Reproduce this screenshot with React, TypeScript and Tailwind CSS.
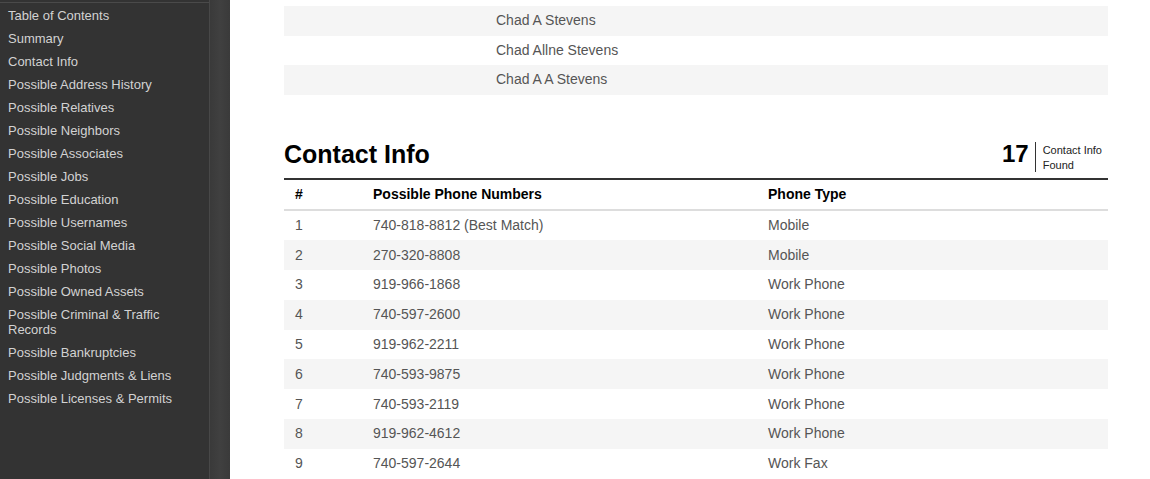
import React from "react";

const nav = [
  "Table of Contents",
  "Summary",
  "Contact Info",
  "Possible Address History",
  "Possible Relatives",
  "Possible Neighbors",
  "Possible Associates",
  "Possible Jobs",
  "Possible Education",
  "Possible Usernames",
  "Possible Social Media",
  "Possible Photos",
  "Possible Owned Assets",
  "Possible Criminal & Traffic Records",
  "Possible Bankruptcies",
  "Possible Judgments & Liens",
  "Possible Licenses & Permits",
];

const names = ["Chad A Stevens", "Chad Allne Stevens", "Chad A A Stevens"];

const phones: [string, string][] = [
  ["740-818-8812 (Best Match)", "Mobile"],
  ["270-320-8808", "Mobile"],
  ["919-966-1868", "Work Phone"],
  ["740-597-2600", "Work Phone"],
  ["919-962-2211", "Work Phone"],
  ["740-593-9875", "Work Phone"],
  ["740-593-2119", "Work Phone"],
  ["919-962-4612", "Work Phone"],
  ["740-597-2644", "Work Fax"],
];

export default function App() {
  return (
    <div
      className="flex h-[479px] w-[1150px] overflow-hidden bg-white"
      style={{ fontFamily: '"Liberation Sans", Arial, sans-serif' }}
    >
      <aside className="flex w-[230px] shrink-0">
        <div className="flex w-[210px] flex-col border-r border-[#484848] bg-[#333333]">
          <div className="mt-[2px] h-px w-full bg-[#4a4a4a]" />
          <nav className="flex flex-col pt-[1px]">
            {nav.map((n) => (
              <div
                key={n}
                className="py-[4px] pl-[8px] pr-[16px] text-[13px] leading-[15px] text-[#d2d2d2]"
              >
                {n}
              </div>
            ))}
          </nav>
        </div>
        <div className="w-[20px] bg-gradient-to-r from-[#3a3a3a] via-[#404040] to-[#3a3a3a]" />
      </aside>

      <main className="flex-1 pl-[54px] pr-[42px]">
        <div className="pt-[6px]">
          {names.map((n, i) => (
            <div
              key={n}
              className={`flex h-[29.5px] items-center pl-[212px] text-[14px] text-[#555555] ${
                i % 2 === 0 ? "bg-[#f5f5f5]" : "bg-white"
              }`}
            >
              {n}
            </div>
          ))}
        </div>

        <div className="mt-[44px] flex items-end justify-between pb-[5px]">
          <h2 className="mb-[4px] text-[25px] font-bold leading-[30px] text-black">Contact Info</h2>
          <div className="flex items-start pr-[6px]">
            <span className="text-[24px] font-bold leading-[23px] text-black">17</span>
            <div className="ml-[6px] mr-[7px] h-[30px] w-px bg-[#333333]" />
            <div className="pt-[1px] text-[11px] leading-[15px] text-[#222222]">
              Contact Info
              <br />
              Found
            </div>
          </div>
        </div>

        <div className="border-t-2 border-[#333333]">
          <div className="grid h-[31px] grid-cols-[78px_395px_1fr] items-center border-b-2 border-[#dddddd] text-[14px] font-bold text-black">
            <div className="pl-[11px]">#</div>
            <div className="pl-[11px]">Possible Phone Numbers</div>
            <div className="pl-[11px]">Phone Type</div>
          </div>
          {phones.map(([p, t], i) => (
            <div
              key={p}
              className={`grid h-[29.8px] grid-cols-[78px_395px_1fr] items-center text-[14px] text-[#555555] ${
                i % 2 === 1 ? "bg-[#f5f5f5]" : "bg-white"
              }`}
            >
              <div className="pl-[11px]">{i + 1}</div>
              <div className="pl-[11px]">{p}</div>
              <div className="pl-[11px]">{t}</div>
            </div>
          ))}
        </div>
      </main>
    </div>
  );
}
